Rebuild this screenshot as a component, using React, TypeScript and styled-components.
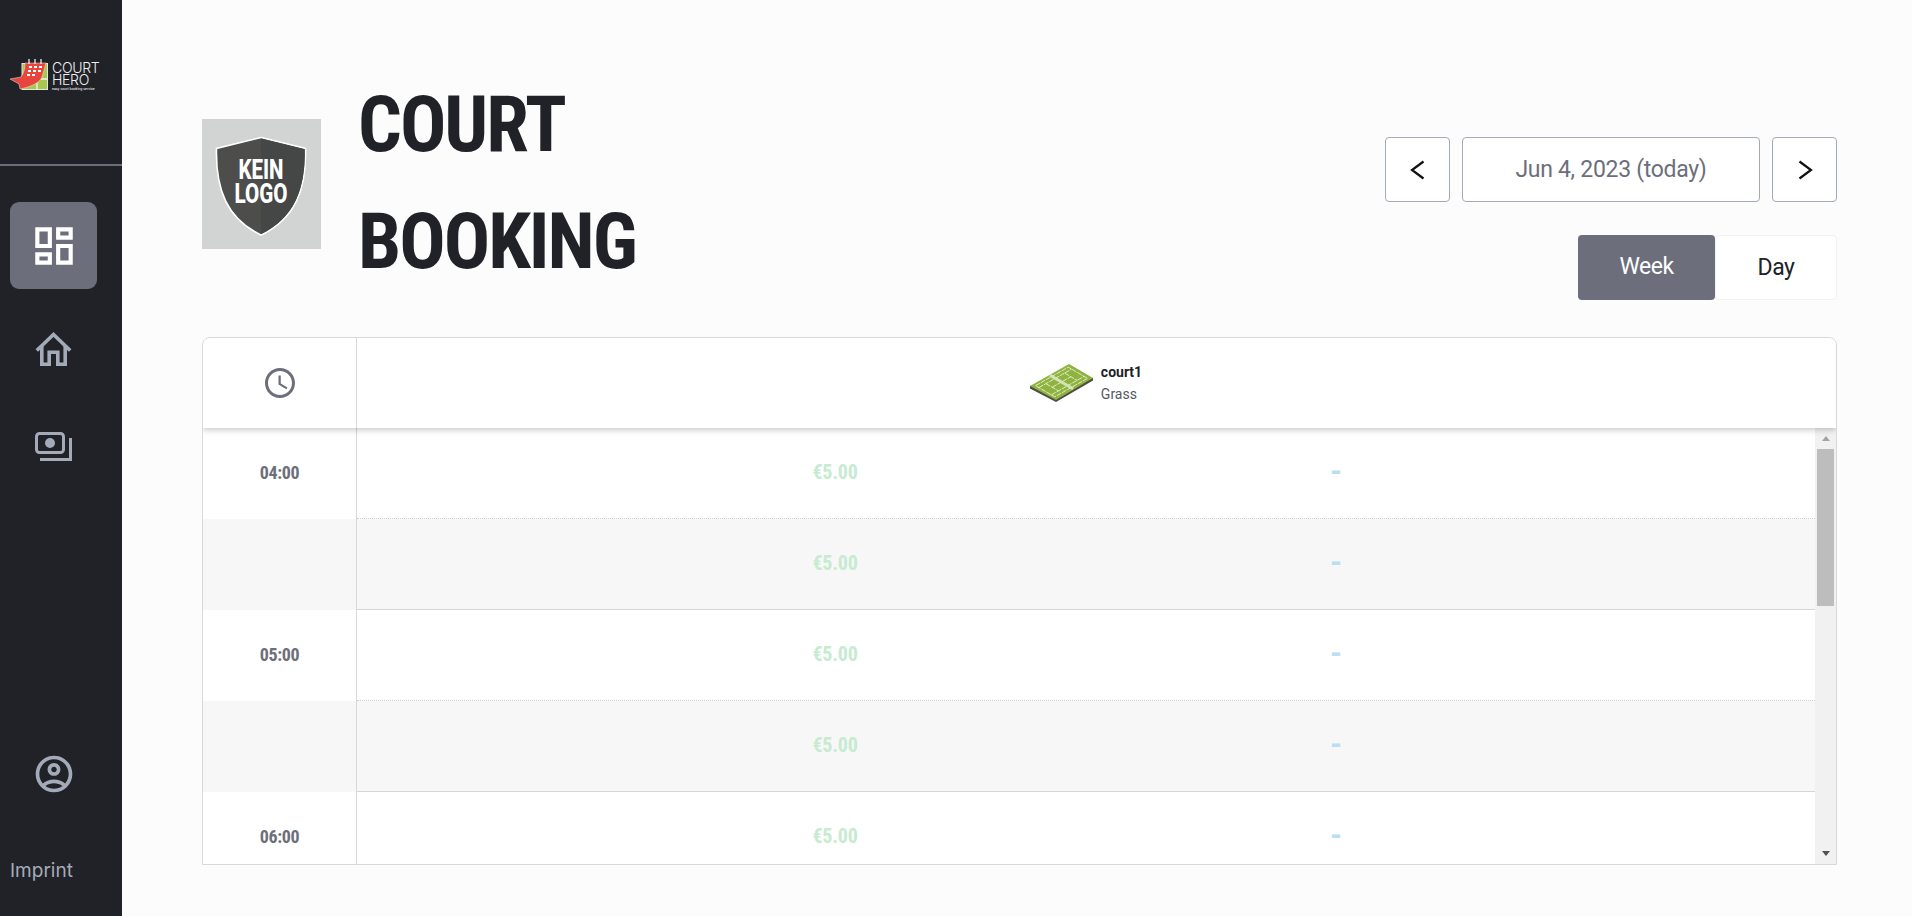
import React from "react";
import styled, { createGlobalStyle } from "styled-components";
import { MdOutlineDashboard, MdOutlineAccountCircle, MdOutlineAccessTime } from "react-icons/md";

const GlobalStyle = createGlobalStyle`
  html, body {
    margin: 0;
    height: 100%;
    overflow: hidden;
    background: #fcfcfc;
    font-family: Roboto, "Liberation Sans", sans-serif;
  }
  * { box-sizing: border-box; }
`;

const Page = styled.div`
  display: flex;
  height: 916px;
`;

const Sidebar = styled.aside`
  width: 122px;
  flex: none;
  display: flex;
  flex-direction: column;
  background: #202228;
  color: #a4abb8;
`;

const LogoArea = styled.div`
  height: 166px;
  flex: none;
  display: flex;
  align-items: flex-start;
  gap: 4px;
  padding: 59px 0 0 10px;
  border-bottom: 2px solid #6c6f7b;
`;

const LogoWords = styled.div`
  display: flex;
  flex-direction: column;
  color: #f0f0f0;
  font-family: Inter, sans-serif;
  font-weight: 300;
  font-size: 14px;
  line-height: 12px;
  letter-spacing: -0.3px;
  padding-top: 3px;
`;

const LogoTag = styled.span`
  font-size: 3.3px;
  line-height: 6px;
  letter-spacing: 0;
  font-weight: 500;
  white-space: nowrap;
`;

const Nav = styled.nav`
  display: flex;
  flex-direction: column;
  padding: 36px 0 0 10px;
  gap: 11px;
`;

const NavItem = styled.div<{ $active?: boolean }>`
  width: 87px;
  height: 87px;
  display: flex;
  align-items: center;
  justify-content: center;
  border-radius: 9px;
  margin-bottom: ${(p) => (p.$active ? "5px" : "0")};
  background: ${(p) => (p.$active ? "#6c6f7b" : "transparent")};
  color: ${(p) => (p.$active ? "#ffffff" : "#a4abb8")};
`;

const SidebarFoot = styled.div`
  margin-top: auto;
  display: flex;
  flex-direction: column;
  padding: 0 0 33px 10px;
  gap: 42px;
`;

const Imprint = styled.span`
  font-family: Inter, sans-serif;
  font-size: 19px;
  line-height: 24px;
  color: #a4abb8;
`;

const Main = styled.main`
  flex: 1;
  min-width: 0;
  padding: 66px 75px 0 80px;
`;

const Header = styled.header`
  display: flex;
  justify-content: space-between;
  align-items: flex-end;
  height: 234px;
`;

const Brand = styled.div`
  display: flex;
  align-items: center;
  gap: 37px;
  height: 233px;
`;

const ClubLogo = styled.div`
  width: 119px;
  height: 130px;
  padding: 4px 2px 0 0;
  background: #d2d4d3;
  display: flex;
  align-items: center;
  justify-content: center;
`;

const Title = styled.h1`
  margin: 0;
  width: 300px;
  font-size: 77px;
  line-height: 116.4px;
  font-weight: 700;
  font-stretch: 75%;
  letter-spacing: -2px;
  color: #202228;
`;

const Controls = styled.div`
  display: flex;
  flex-direction: column;
  align-items: flex-end;
  gap: 33px;
`;

const DateRow = styled.div`
  display: flex;
  gap: 12px;
`;

const ArrowButton = styled.button`
  width: 65px;
  height: 65px;
  padding: 0;
  display: flex;
  align-items: center;
  justify-content: center;
  background: #fff;
  border: 1px solid #a4abb8;
  border-radius: 4px;
`;

const DateField = styled.div`
  width: 298px;
  height: 65px;
  display: flex;
  align-items: center;
  justify-content: center;
  background: #fff;
  border: 1px solid #a4abb8;
  border-radius: 4px;
  font-size: 23px;
  letter-spacing: -0.3px;
  color: #6c6f7b;
`;

const Toggle = styled.div`
  display: flex;
`;

const ToggleButton = styled.button<{ $active?: boolean; $wide?: boolean }>`
  width: ${(p) => (p.$wide ? "137px" : "122px")};
  height: 65px;
  padding: 0 0 ${(p) => (p.$active ? "3px" : "0")};
  font: 400 23px Roboto, sans-serif;
  letter-spacing: -0.5px;
  border-radius: 4px;
  background: ${(p) => (p.$active ? "#6c6f7b" : "#fff")};
  color: ${(p) => (p.$active ? "#fff" : "#202228")};
  border: ${(p) => (p.$active ? "none" : "1px solid #f2f2f2")};
`;

const Table = styled.section`
  margin-top: 37px;
  height: 528px;
  display: flex;
  flex-direction: column;
  background: #fff;
  border: 1px solid #d8d8d8;
  border-radius: 8px 8px 0 0;
  overflow: hidden;
`;

const HeadRow = styled.div`
  position: relative;
  z-index: 2;
  height: 90px;
  flex: none;
  display: flex;
  background: #fff;
  box-shadow: 0 2px 6px rgba(0, 0, 0, 0.22);
`;

const TimeHead = styled.div`
  width: 154px;
  flex: none;
  display: flex;
  align-items: center;
  justify-content: center;
  color: #6c6f7b;
  border-right: 1px solid #d8d8d8;
`;

const CourtHead = styled.div`
  flex: 1;
  display: flex;
  align-items: center;
  justify-content: center;
  gap: 7px;
  padding-right: 21px;
`;

const CourtText = styled.div`
  display: flex;
  flex-direction: column;
  font-size: 14px;
  line-height: 22px;
  color: #55585f;
`;

const CourtName = styled.strong`
  color: #202228;
  font-weight: 700;
`;

const Body = styled.div`
  flex: 1;
  min-height: 0;
  display: flex;
`;

const Rows = styled.div`
  flex: 1;
  min-width: 0;
  overflow: hidden;
`;

const ScrollTrack = styled.div`
  width: 21px;
  flex: none;
  display: flex;
  flex-direction: column;
  background: #f1f1f1;
`;

const ScrollArrow = styled.div<{ $down?: boolean }>`
  height: 21px;
  flex: none;
  display: flex;
  align-items: center;
  justify-content: center;
  margin-top: ${(p) => (p.$down ? "auto" : "0")};

  &::before {
    content: "";
    border-left: 4.5px solid transparent;
    border-right: 4.5px solid transparent;
    border-bottom: ${(p) => (p.$down ? "0" : "5px solid #a3a3a3")};
    border-top: ${(p) => (p.$down ? "5px solid #505050" : "0")};
  }
`;

const ScrollThumb = styled.div`
  height: 157px;
  margin: 0 2px;
  background: #bdbdbd;
`;

const Row = styled.div<{ $half: boolean }>`
  display: flex;
  height: 91px;
  background: ${(p) => (p.$half ? "#f7f7f7" : "#fff")};
`;

const TimeCell = styled.div`
  width: 154px;
  flex: none;
  display: flex;
  align-items: center;
  justify-content: center;
  padding-bottom: 2px;
  font-size: 18px;
  font-weight: 700;
  font-stretch: 75%;
  letter-spacing: -0.4px;
  color: #6c6f7b;
  border-right: 1px solid #d8d8d8;
`;

const SlotCell = styled.div<{ $half: boolean }>`
  flex: 1;
  display: flex;
  align-items: center;
  gap: 101px;
  padding: 0 0 2px 278px;
  border-bottom: 1px ${(p) => (p.$half ? "solid #d6d6d6" : "dotted #cfcfcf")};
`;

const Price = styled.span`
  width: 400px;
  text-align: center;
  font-size: 20px;
  line-height: 24px;
  font-weight: 700;
  font-stretch: 75%;
  letter-spacing: -0.2px;
  color: #c6ebd0;
`;

const Dash = styled.span`
  width: 400px;
  text-align: center;
  font-size: 28px;
  line-height: 24px;
  font-weight: 900;
  color: #b8e0f0;
`;

const rows = ["04:00", "", "05:00", "", "06:00", "", "07:00", "", "08:00", "", "09:00", ""];

const Chevron = ({ flip }: { flip?: boolean }) => (
  <svg width="24" height="24" viewBox="0 0 24 24" fill="none" stroke="#111" strokeWidth="2.2">
    <path d={flip ? "M6.5 3.5L18 12 6.5 20.5" : "M17.5 3.5L6 12l11.5 8.5"} />
  </svg>
);

const HomeIcon = () => (
  <svg width="37" height="34" viewBox="0 0 37 34" fill="none" stroke="#a4abb8" strokeWidth="3.6">
    <path d="M1.8 18.5L18.5 2.5l16.7 16" />
    <path d="M6.8 14V32.2H14.2V20.2H22.8V32.2H30.2V14" />
  </svg>
);

const CashIcon = () => (
  <svg width="37" height="30" viewBox="0 0 37 30" fill="none" stroke="#a4abb8" strokeWidth="3">
    <rect x="1.5" y="1.5" width="27" height="19" rx="3" />
    <circle cx="15" cy="11" r="5" fill="#a4abb8" stroke="none" />
    <path d="M35.5 6V27.5H5" />
  </svg>
);

const HeroMark = () => (
  <svg width="38" height="31" viewBox="0 0 38 31">
    <rect x="12" y="4.5" width="25.5" height="26" fill="#a5c94f" stroke="#e4e4e4" />
    <path d="M27 30V20h10" fill="none" stroke="#f4f4f4" strokeWidth="1.3" />
    <path d="M15 4H36L32 18C30 24 20 28 10 30L9 25L0 20L11 18C14 14 15 9 15 4Z" fill="#e8453c" stroke="#f0e8e8" strokeWidth="0.5" />
    <g fill="#fff">
      <rect x="19" y="7" width="3" height="2" />
      <rect x="24" y="7" width="3" height="2" />
      <rect x="29" y="7" width="3" height="2" />
      <rect x="18" y="11" width="3" height="2" />
      <rect x="23" y="11" width="3" height="2" />
      <rect x="28" y="11" width="3" height="2" />
      <rect x="17" y="15" width="3" height="2" />
      <rect x="22" y="15" width="3" height="2" />
    </g>
    <path d="M19 0v5M25 0v5M31 0v5" stroke="#eee" strokeWidth="1.3" />
  </svg>
);

const Shield = () => (
  <svg width="92" height="100" viewBox="0 0 92 100">
    <path d="M46 1.500L90.500 12.500c1 40-10 70-44.500 86.500C11.500 82.500 0.500 52.500 1.500 12.500z" fill="#4d4d4c" stroke="#fff" strokeWidth="1.600" />
    <path d="M46 2.500L89.700 13.200c1 39-10 68-43.700 85z" fill="#454746" />
    <text x="46" y="43" textAnchor="middle" fill="#fff" fontSize="27" fontWeight="800" fontFamily="Roboto, sans-serif" textLength="45" lengthAdjust="spacingAndGlyphs">KEIN</text>
    <text x="46" y="67" textAnchor="middle" fill="#fff" fontSize="27" fontWeight="800" fontFamily="Roboto, sans-serif" textLength="53" lengthAdjust="spacingAndGlyphs">LOGO</text>
  </svg>
);

const CourtIcon = () => (
  <svg width="64" height="38" viewBox="0 0 64 38">
    <path d="M0 22v2.500l26 13.500 37-21.500V14z" fill="#4d4d45" />
    <path d="M0 22L39 0l24 14-37 22z" fill="#8fb340" />
    <g transform="matrix(.39 -.22 .24 .14 0 22)" fill="none" stroke="#e9f1d4">
      <g strokeDasharray="5 1">
        <rect x="8" y="10" width="84" height="80" vectorEffect="non-scaling-stroke" style={{ strokeWidth: 0.9 }} />
        <path d="M8 24H92M8 76H92M26 24V76M74 24V76M26 50H74" vectorEffect="non-scaling-stroke" style={{ strokeWidth: 0.9 }} />
      </g>
      <path d="M50 2V98" stroke="#d5e3b8" vectorEffect="non-scaling-stroke" style={{ strokeWidth: 3 }} />
    </g>
  </svg>
);

export default function App() {
  return (
    <Page>
      <GlobalStyle />
      <Sidebar>
        <LogoArea>
          <HeroMark />
          <LogoWords>
            <span>COURT</span>
            <span>HERO</span>
            <LogoTag>easy court booking service</LogoTag>
          </LogoWords>
        </LogoArea>
        <Nav>
          <NavItem $active>
            <MdOutlineDashboard size={50} />
          </NavItem>
          <NavItem>
            <HomeIcon />
          </NavItem>
          <NavItem>
            <CashIcon />
          </NavItem>
        </Nav>
        <SidebarFoot>
          <NavItem>
            <MdOutlineAccountCircle size={44} />
          </NavItem>
          <Imprint>Imprint</Imprint>
        </SidebarFoot>
      </Sidebar>
      <Main>
        <Header>
          <Brand>
            <ClubLogo>
              <Shield />
            </ClubLogo>
            <Title>COURT BOOKING</Title>
          </Brand>
          <Controls>
            <DateRow>
              <ArrowButton>
                <Chevron />
              </ArrowButton>
              <DateField>Jun 4, 2023 (today)</DateField>
              <ArrowButton>
                <Chevron flip />
              </ArrowButton>
            </DateRow>
            <Toggle>
              <ToggleButton $active $wide>Week</ToggleButton>
              <ToggleButton>Day</ToggleButton>
            </Toggle>
          </Controls>
        </Header>
        <Table>
          <HeadRow>
            <TimeHead>
              <MdOutlineAccessTime size={36} />
            </TimeHead>
            <CourtHead>
              <CourtIcon />
              <CourtText>
                <CourtName>court1</CourtName>
                <span>Grass</span>
              </CourtText>
            </CourtHead>
          </HeadRow>
          <Body>
            <Rows>
              {rows.map((time, i) => (
                <Row key={i} $half={i % 2 === 1}>
                  <TimeCell>{time}</TimeCell>
                  <SlotCell $half={i % 2 === 1}>
                    <Price>€5.00</Price>
                    <Dash>-</Dash>
                  </SlotCell>
                </Row>
              ))}
            </Rows>
            <ScrollTrack>
              <ScrollArrow />
              <ScrollThumb />
              <ScrollArrow $down />
            </ScrollTrack>
          </Body>
        </Table>
      </Main>
    </Page>
  );
}
